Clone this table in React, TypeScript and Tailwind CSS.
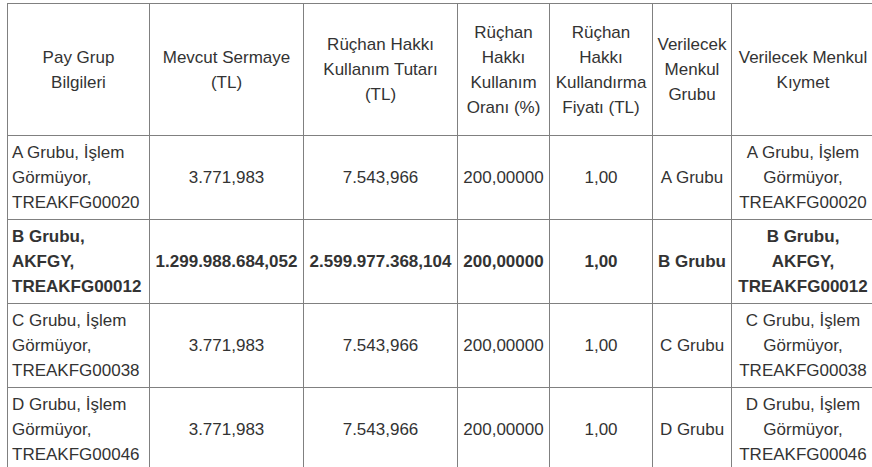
const headers = [
  "Pay Grup\nBilgileri",
  "Mevcut Sermaye (TL)",
  "Rüçhan Hakkı Kullanım Tutarı (TL)",
  "Rüçhan Hakkı Kullanım Oranı (%)",
  "Rüçhan Hakkı Kullandırma Fiyatı (TL)",
  "Verilecek Menkul Grubu",
  "Verilecek Menkul Kıymet",
];

const widths = ["w-[142px]", "w-[154px]", "w-[154px]", "w-[92px]", "w-[103px]", "w-[79px]", "w-[143px]"];

type Row = { info: string; capital: string; amount: string; bold?: boolean; group: string; h: string };

const rows: Row[] = [
  { info: "A Grubu, İşlem Görmüyor, TREAKFG00020", capital: "3.771,983", amount: "7.543,966", group: "A Grubu", h: "h-[84px]" },
  { info: "B Grubu, AKFGY, TREAKFG00012", capital: "1.299.988.684,052", amount: "2.599.977.368,104", group: "B Grubu", bold: true, h: "h-[83px]" },
  { info: "C Grubu, İşlem Görmüyor, TREAKFG00038", capital: "3.771,983", amount: "7.543,966", group: "C Grubu", h: "h-[84px]" },
  { info: "D Grubu, İşlem Görmüyor, TREAKFG00046", capital: "3.771,983", amount: "7.543,966", group: "D Grubu", h: "h-[84px]" },
];

const cell = "border border-[#808080] px-[4px] py-[4px]";

const App = () => {
  return (
    <div className="w-[872px] h-[467px] overflow-hidden bg-white pl-[7px] pt-[3px] font-['Liberation_Sans',Arial,sans-serif] text-[17px] leading-[25px] text-[#333]">
      <table className="table-fixed border-collapse w-[867px]">
        <colgroup>
          {widths.map((w, i) => (
            <col key={i} className={w} />
          ))}
        </colgroup>
        <thead>
          <tr className="h-[132px]">
            {headers.map((h) => (
              <th key={h} className={`${cell} font-normal text-center align-middle whitespace-pre-line`}>
                {h}
              </th>
            ))}
          </tr>
        </thead>
        <tbody>
          {rows.map((r) => (
            <tr key={r.info} className={`${r.h} ${r.bold ? "font-bold" : ""}`}>
              <td className={`${cell} text-left`}>{r.info}</td>
              <td className={`${cell} text-center whitespace-nowrap px-0`}>{r.capital}</td>
              <td className={`${cell} text-center whitespace-nowrap px-0`}>{r.amount}</td>
              <td className={`${cell} text-center`}>200,00000</td>
              <td className={`${cell} text-center`}>1,00</td>
              <td className={`${cell} text-center whitespace-nowrap px-0`}>{r.group}</td>
              <td className={`${cell} text-center`}>{r.info}</td>
            </tr>
          ))}
        </tbody>
      </table>
    </div>
  );
};

export default App;
